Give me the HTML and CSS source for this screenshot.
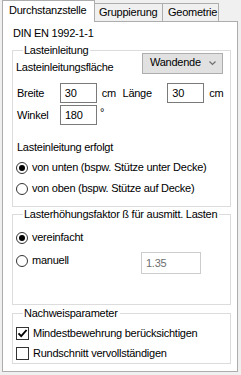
FILE: index.html
```html
<!DOCTYPE html>
<html lang="de">
<head>
  <meta charset="UTF-8" />
  <title>Durchstanzstelle</title>
  <link rel="stylesheet" href="styles.css">
</head>
<body>
  <div class="window">
    <!-- Tab strip -->
    <div class="tabs">
      <div class="tab active">Durchstanzstelle</div>
      <div class="tab">Gruppierung</div>
      <div class="tab">Geometrie</div>
    </div>

    <!-- Tab page -->
    <div class="panel">
      <div class="norm">DIN EN 1992-1-1</div>

      <fieldset class="group group-load">
        <legend>Lasteinleitung</legend>

        <div class="row row-area">
          <span class="label">Lasteinleitungsfläche</span>
          <div class="select">
            <span>Wandende</span>
            <svg class="arrow" width="7" height="5" viewBox="0 0 7 5">
              <path d="M0.5 0.5 L3.5 3.5 L6.5 0.5" fill="none" stroke="#707070" stroke-width="1.2"/>
            </svg>
          </div>
        </div>

        <div class="row row-dims">
          <span class="label label-short">Breite</span>
          <div class="input">30</div>
          <span class="unit">cm</span>
          <span class="label label-length">Länge</span>
          <div class="input">30</div>
          <span class="unit">cm</span>
        </div>

        <div class="row row-angle">
          <span class="label label-short">Winkel</span>
          <div class="input">180</div>
          <span class="unit unit-deg">°</span>
        </div>

        <div class="caption">Lasteinleitung erfolgt</div>

        <div class="option option-first">
          <span class="radio checked"></span>
          <span>von unten (bspw. Stütze unter Decke)</span>
        </div>
        <div class="option">
          <span class="radio"></span>
          <span>von oben (bspw. Stütze auf Decke)</span>
        </div>
      </fieldset>

      <fieldset class="group group-factor">
        <legend>Lasterhöhungsfaktor ß für ausmitt. Lasten</legend>
        <div class="option option-first">
          <span class="radio checked"></span>
          <span>vereinfacht</span>
        </div>
        <div class="option option-manual">
          <span class="radio"></span>
          <span>manuell</span>
          <div class="input input-disabled">1.35</div>
        </div>
      </fieldset>

      <fieldset class="group group-checks">
        <legend>Nachweisparameter</legend>
        <div class="option option-first">
          <span class="check">
            <svg width="11" height="11" viewBox="0 0 11 11">
              <path d="M1.5 5.3 L4.2 8.2 L9.6 2" fill="none" stroke="#000" stroke-width="1.9"/>
            </svg>
          </span>
          <span>Mindestbewehrung berücksichtigen</span>
        </div>
        <div class="option">
          <span class="check"></span>
          <span>Rundschnitt vervollständigen</span>
        </div>
      </fieldset>
    </div>
  </div>
</body>
</html>
```

FILE: styles.css
```css
/*
  Global reset and fonts
*/
* {
  box-sizing: border-box;
  margin: 0;
  padding: 0;
}
body {
  background: #f0f0f0;
  font-family: "Liberation Sans", Arial, sans-serif;
  font-size: 11px;
  line-height: 13px;
  letter-spacing: -0.25px;
  color: #000000;
}
.window {
  width: 241px;
  height: 375px;
  padding: 0 3px 0 2px;
}
/*
  Tab strip
*/
.tabs {
  display: flex;
  align-items: flex-end;
  height: 21px;
}
.tab {
  height: 18px;
  padding: 2px 0 0 4px;
  border: 1px solid #adadad;
  border-bottom: none;
  border-left: none;
  background: #f0f0f0;
}
.tab:nth-child(2) {
  width: 68px;
  padding-left: 4px;
}
.tab:nth-child(3) {
  width: 56px;
  padding-left: 5px;
}
.tab.active {
  position: relative;
  z-index: 1;
  width: 93px;
  height: 22px;
  margin-bottom: -1px;
  padding: 3px 0 0 6px;
  border-left: 1px solid #adadad;
  background: #ffffff;
}
/*
  Tab page
*/
.panel {
  height: 351px;
  padding: 5px 6px 0 9px;
  border: 1px solid #adadad;
  background: #ffffff;
}
.norm {
  margin-left: 1px;
}
/*
  Group boxes
*/
.group {
  border: 1px solid #dcdcdc;
  padding: 0 0 0 3px;
  min-width: 0;
}
.group legend {
  margin-left: 7px;
  padding: 0 2px 0 1px;
  line-height: 12px;
}
.group-load {
  height: 163px;
  margin-top: 4px;
}
.group-factor {
  height: 97px;
  margin-top: 1px;
}
.group-checks {
  height: 57px;
  margin-top: 2px;
}
/*
  Form rows
*/
.row {
  display: flex;
  align-items: center;
}
.row-area {
  margin-top: -3px;
  height: 21px;
}
.row-area .label {
  width: 126px;
  margin-top: 7px;
}
.row-dims {
  margin-top: 9px;
  margin-left: 1px;
}
.row-angle {
  margin-top: 2px;
  margin-left: 1px;
}
.label-short {
  width: 43px;
}
.label-length {
  width: 45px;
}
.unit {
  width: 26px;
  padding-left: 5px;
}
.unit-deg {
  padding-left: 3px;
  padding-bottom: 6px;
}
/*
  Inputs
*/
.select {
  display: flex;
  align-items: center;
  justify-content: space-between;
  width: 81px;
  height: 21px;
  padding: 0 6px 0 7px;
  border: 1px solid #adadad;
  background: #e1e1e1;
}
.select span {
  margin-top: -2px;
}
.input {
  width: 37px;
  height: 20px;
  padding: 3px 0 0 4px;
  border: 1px solid #7a7a7a;
  background: #ffffff;
}
.input-disabled {
  width: 60px;
  height: 22px;
  margin: 4px 29px 0 auto;
  padding-top: 4px;
  border-color: #cccccc;
  color: #6d6d6d;
}
/*
  Radio buttons and checkboxes
*/
.caption {
  margin-top: 16px;
  margin-left: 1px;
}
.option {
  display: flex;
  align-items: center;
  gap: 4px;
  height: 13px;
  margin-top: 8px;
}
.option-first {
  margin-top: 7px;
}
.group-factor .option-first {
  margin-top: 11px;
}
.option-manual {
  margin-top: 10px;
}
.group-checks .option {
  margin-top: 7px;
}
.group-checks .option-first {
  margin-top: 8px;
}
.radio {
  position: relative;
  width: 12px;
  height: 12px;
  flex-shrink: 0;
  border: 1px solid #333333;
  border-radius: 50%;
  background: #ffffff;
}
.radio.checked::after {
  content: "";
  position: absolute;
  left: 2px;
  top: 2px;
  width: 6px;
  height: 6px;
  border-radius: 50%;
  background: #000000;
}
.check {
  display: flex;
  align-items: center;
  justify-content: center;
  width: 13px;
  height: 13px;
  flex-shrink: 0;
  border: 1px solid #333333;
  background: #ffffff;
}
```
